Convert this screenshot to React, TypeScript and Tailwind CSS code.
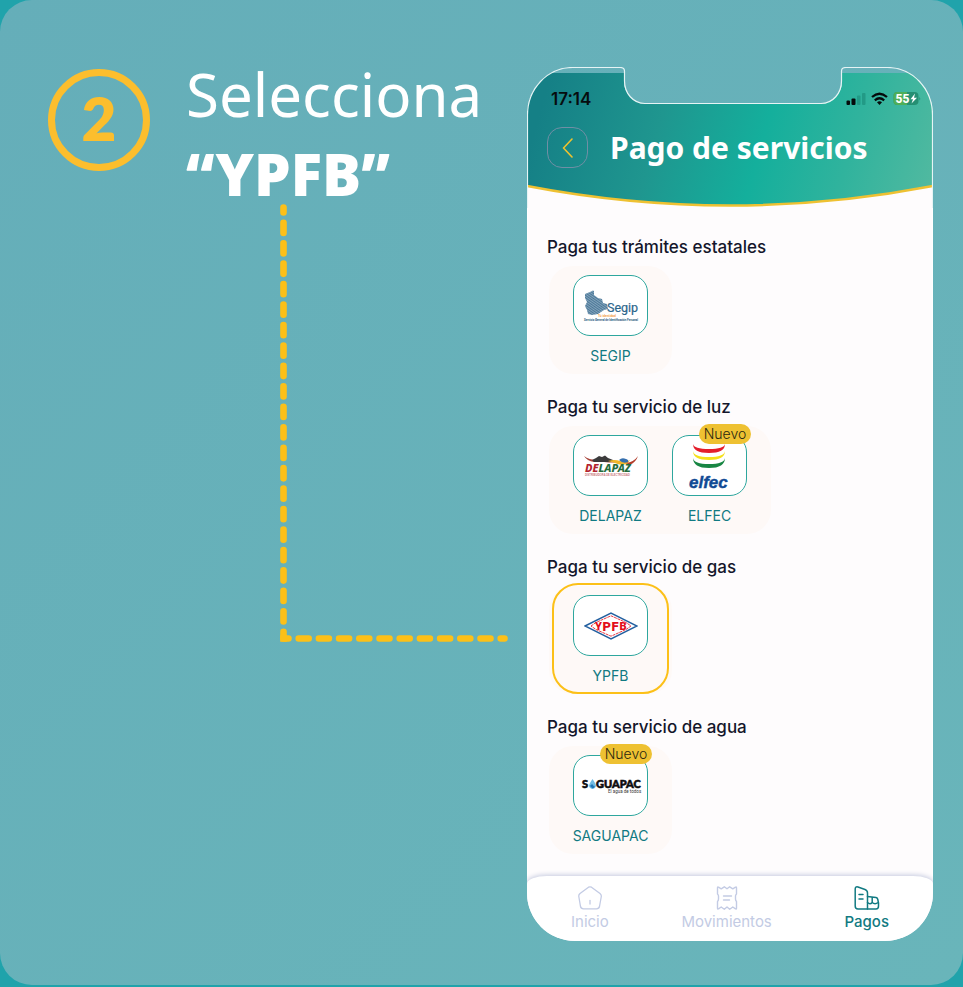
import type { ReactNode } from "react";

function SegipLogo() {
  return (
    <svg viewBox="0 0 54 32" className="h-8 w-[54px] overflow-visible" aria-hidden="true">
      <defs>
        <pattern id="finger" width="2" height="2" patternUnits="userSpaceOnUse" patternTransform="rotate(35)">
          <rect width="2" height="2" fill="#4b7899" />
          <rect width="2" height="0.6" fill="#a9c0d0" />
        </pattern>
      </defs>
      <path
        d="M1 4 L6 2 L9 0.5 L10 1 L10 5 L14 8 L18 9 L19 13 L23 14 L24 19 L20 20 L17 22 L14 24 L8 25 L4 24 L3 20 L1 16 L3 12 L1 8 Z"
        fill="url(#finger)"
      />
      <text x="23" y="22" fontFamily="Roboto, sans-serif" fontSize="12.500" fill="#2c668c" stroke="#2c668c" strokeWidth="0.200">Segip</text>
      <text x="14" y="27" fontFamily="Roboto, sans-serif" fontSize="3.200" fontWeight="700" fill="#f2a04c">Tú identidad</text>
      <text x="0" y="31" fontFamily="Roboto, sans-serif" fontSize="2.800" fontWeight="700" fill="#27597c">
        Servicio General de Identificación Personal
      </text>
    </svg>
  );
}

function DelapazLogo() {
  return (
    <svg viewBox="0 0 54 22" className="h-[22px] w-[54px] overflow-visible" aria-hidden="true">
      <path d="M0 1 Q5 5 13 5 L38 7 Q30 8 20 7 L10 7 Q3 6 0 1Z" fill="#a8433a" />
      <path d="M8 5 L12 3 L15 1 L18 2 L21 .5 L24 3 L29 5 L31 7 L10 7Z" fill="#3c3b3c" />
      <path d="M24 6 Q31 4 36 6 Q42 8 46 5 L43 9 Q36 11 31 8Z" fill="#efb52b" />
      <path d="M35 5 Q38 2 42 4 Q45 5 44 7 Q39 9 35 5Z" fill="#356fae" />
      <path d="M42 8 Q50 7 54 1 Q52 7 46 10Z" fill="#b23d2b" />
      <text x="1" y="17" fontFamily="Noto Sans, sans-serif" fontSize="11" fontWeight="800" fontStyle="italic">
        <tspan fill="#b3232e">DE</tspan>
        <tspan fill="#256c3c">LAPAZ</tspan>
      </text>
      <text x="1" y="20.500" fontFamily="Liberation Sans, Arial, sans-serif" fontSize="2.600" fontWeight="700" fill="#c9767a">
        DISTRIBUIDORA DE ELECTRICIDAD
      </text>
    </svg>
  );
}

function ElfecLogo() {
  return (
    <svg viewBox="0 0 48 52" className="h-[52px] w-12" aria-hidden="true">
      <path d="M7 4 Q8 9 23 9 Q38 9 39 4 Q39 13 23 13 Q7 13 7 4Z" fill="#e41e2b" />
      <path d="M7 11 Q8 17 23 17 Q38 17 39 11 Q39 20 23 20 Q7 20 7 11Z" fill="#f5e019" />
      <path d="M7 18 Q8 24 23 24 Q38 24 39 18 Q39 28 23 28 Q7 28 7 18Z" fill="#188643" />
      <text x="3" y="48" fontFamily="Liberation Sans, Arial, sans-serif" fontSize="17" fontWeight="700" fontStyle="italic" fill="#114a94" stroke="#114a94" strokeWidth="0.400">
        elfec
      </text>
    </svg>
  );
}

function YpfbLogo() {
  return (
    <svg viewBox="0 0 54 28" className="h-7 w-[54px]" aria-hidden="true">
      <path d="M1 14 L27 1 L53 14 L27 27Z" fill="#fff" stroke="#2460a0" strokeWidth="1.400" />
      <path d="M7 14 L12 10.500 L27 3.800 L42 10.500 L47 14 L42 17.500 L27 24.200 L12 17.500Z" fill="none" stroke="#e52431" strokeWidth="0.9" strokeDasharray="3 0.7" />
      <g fontFamily="Roboto, sans-serif" fontWeight="900" fill="#e30d1b" textAnchor="middle">
        <text x="14.500" y="18" fontSize="11">Y</text>
        <text x="22.800" y="19" fontSize="13">P</text>
        <text x="31" y="19" fontSize="13">F</text>
        <text x="39" y="18" fontSize="11">B</text>
      </g>
    </svg>
  );
}

function SaguapacLogo() {
  return (
    <svg viewBox="0 0 60 16" className="h-4 w-[60px] overflow-visible" aria-hidden="true">
      <g fontFamily="Lato, sans-serif" fontWeight="900" fontSize="11" fill="#0c0c0e" stroke="#0c0c0e" strokeWidth="0.600">
        <text x="1" y="10">S</text>
        <text x="15" y="10">GUAPAC</text>
      </g>
      <path d="M11.500 1 Q15 6 15 8 Q14 11 11 11 Q8 10 8 8 Q8 6 11.500 1Z" fill="#70bce4" />
      <path d="M9 8 Q11 5 12 7 Q13 9 14 8 Q13 11 11 10Z" fill="#2277b8" />
      <text x="27" y="15" fontFamily="Roboto, sans-serif" fontSize="4.500" fill="#333">El agua de todos</text>
    </svg>
  );
}

type Service = { name: string; logo: ReactNode; isNew?: boolean };
type Section = { title: string; services: Service[]; highlighted?: boolean };

const sections: Section[] = [
  { title: "Paga tus trámites estatales", services: [{ name: "SEGIP", logo: <SegipLogo /> }] },
  {
    title: "Paga tu servicio de luz",
    services: [
      { name: "DELAPAZ", logo: <DelapazLogo /> },
      { name: "ELFEC", logo: <ElfecLogo />, isNew: true },
    ],
  },
  { title: "Paga tu servicio de gas", services: [{ name: "YPFB", logo: <YpfbLogo /> }], highlighted: true },
  { title: "Paga tu servicio de agua", services: [{ name: "SAGUAPAC", logo: <SaguapacLogo />, isNew: true }] },
];

function ServiceButton({ service }: { service: Service }) {
  return (
    <button type="button" className="flex w-[75px] flex-col items-center gap-[10px]">
      <span className="relative flex h-[61px] w-[75px] items-center justify-center rounded-[17px] border border-[#2ea79e] bg-white">
        {service.logo}
        {service.isNew && (
          <span className="absolute -top-3 -right-[5px] flex h-5 w-[52px] items-center justify-center rounded-full bg-[#eec132] text-sm font-light text-[#2b2810]">
            Nuevo
          </span>
        )}
      </span>
      <span className="text-sm leading-5 whitespace-nowrap text-[#117a82]">{service.name}</span>
    </button>
  );
}

function ServiceSection({ section }: { section: Section }) {
  return (
    <section className="flex flex-col items-start gap-[7px]">
      <h2 className="text-[17px] leading-6 font-medium text-[#14162b]">{section.title}</h2>
      <div className="relative ml-[2px] flex h-[108px] gap-6 rounded-3xl bg-[#fef9f7] px-6 pt-[9px]">
        {section.services.map((s) => (
          <ServiceButton key={s.name} service={s} />
        ))}
        {section.highlighted && (
          <span className="pointer-events-none absolute inset-x-[3px] -top-[3px] bottom-0 rounded-[26px] border-2 border-[#fcc018]" />
        )}
      </div>
    </section>
  );
}

function HeaderBackdrop() {
  return (
    <svg viewBox="0 0 406 141" preserveAspectRatio="none" className="absolute inset-0 h-full w-full" aria-hidden="true">
      <defs>
        <linearGradient id="header" gradientUnits="userSpaceOnUse" x1="20" y1="20" x2="400" y2="130">
          <stop offset="0" stopColor="#158086" />
          <stop offset="0.3" stopColor="#1f968f" />
          <stop offset="0.56" stopColor="#14af9c" />
          <stop offset="0.78" stopColor="#30b39d" />
          <stop offset="1" stopColor="#50b9a0" />
        </linearGradient>
        <clipPath id="screen">
          <path d="M0 141 V48 C0 22 20 0 46 0 H93 Q97 0 97 4 V14 C97 26 106 36 118 36 H294 C306 36 315 26 315 14 V4 Q315 0 319 0 H360 C386 0 406 22 406 48 V141Z" />
        </clipPath>
      </defs>
      <g clipPath="url(#screen)">
        <rect y="6" width="406" height="135" fill="#fefcfd" />
        <path d="M0 6 H406 V119 Q203 158 0 119Z" fill="url(#header)" />
        <path d="M0 119 Q203 158 406 119" fill="none" stroke="#eec132" strokeWidth="2.400" />
      </g>
      <path
        d="M0.500 141 V48 C0.500 22 20 0.500 46 0.500 H93 Q97.500 0.500 97.500 4 V14 C97.500 26 106 36.500 118 36.500 H294 C306 36.500 314.500 26 314.500 14 V4 Q314.500 0.500 319 0.500 H360 C386 0.500 405.500 22 405.500 48 V141"
        fill="none"
        stroke="#e6f4f5"
        strokeWidth="1.200"
      />
    </svg>
  );
}

function StatusIcons() {
  return (
    <svg viewBox="0 0 76 16" className="h-4 w-[76px]" role="img" aria-label="Señal, wifi y batería">
      <rect x="1.500" y="9.500" width="3.500" height="4.500" rx="1" fill="#050b0b" />
      <rect x="6.500" y="7.500" width="4" height="6.500" rx="1" fill="#050b0b" />
      <rect x="12" y="4.500" width="3.500" height="9.500" rx="1" fill="#229a86" />
      <rect x="17" y="2" width="3.500" height="12" rx="1" fill="#229a86" />
      <g fill="none" stroke="#050b0b" strokeWidth="2.300">
        <path d="M27 6 Q34.500 -0.500 42 6" />
        <path d="M29.800 9.300 Q34.500 5.300 39.200 9.300" />
      </g>
      <path d="M32 11.300 Q34.500 9.300 37 11.300 L34.500 14Z" fill="#050b0b" />
      <rect x="48.500" y="1" width="25" height="13" rx="4" fill="#258f73" />
      <path d="M52.500 1 H62 V14 H52.500 Q48.500 14 48.500 10 V5 Q48.500 1 52.500 1Z" fill="#4fae58" />
      <path d="M74.300 5.500 Q76 7.500 74.300 9.500Z" fill="#258f73" />
      <text x="50.500" y="12" fontFamily="Roboto, sans-serif" fontSize="12" fontWeight="800" fill="#fff">55</text>
      <path d="M70 2.500 L65.500 8.300 H68 L66.500 12.500 L72 6.800 H69Z" fill="#fff" />
    </svg>
  );
}

function HomeIcon() {
  return (
    <svg viewBox="0 0 24 24" className="size-6" fill="none" stroke="currentColor" strokeWidth="1.300" strokeLinecap="round" strokeLinejoin="round" aria-hidden="true">
      <path d="M10.500 1.200 Q12 .5 13.500 1.200 L22 7.500 Q23.500 8.800 23.300 10.500 L21.500 20.500 Q21 22.700 18.500 22.800 H5.500 Q3 22.700 2.500 20.500 L.8 10.500 Q.5 8.800 2 7.500Z" />
      <path d="M12 14.500 V18" />
    </svg>
  );
}

function ReceiptIcon() {
  return (
    <svg viewBox="0 0 24 24" className="size-6" fill="none" stroke="currentColor" strokeWidth="1.400" strokeLinecap="round" strokeLinejoin="round" aria-hidden="true">
      <path d="M2.500 2 Q2.500 .5 3.500 1.200 L6.200 2.800 L9.300 .8 L12 2.800 L14.700 .8 L17.800 2.800 L20.500 1.200 Q21.500 .5 21.500 2 V8 Q20.500 9 20.500 10 V13 Q20.500 14.500 21.500 15.500 V22 Q21.500 23.500 20.500 22.800 L17.800 21 L14.700 23.200 L12 21 L9.300 23.200 L6.200 21 L3.500 22.800 Q2.500 23.500 2.500 22 V15.500 Q3.500 14.500 3.500 13 V10 Q3.500 9 2.500 8Z" />
      <path d="M8.500 10 H16.500 M8.500 14 H14.500" />
    </svg>
  );
}

function BuildingIcon() {
  return (
    <svg viewBox="0 0 26 24" className="h-6 w-[26px]" fill="none" stroke="currentColor" strokeWidth="1.500" strokeLinecap="round" strokeLinejoin="round" aria-hidden="true">
      <path d="M13.500 23 H4 Q1.200 23 1.200 20 V3 Q1.200 .3 4 1 L11 3.500 Q13.500 4.500 13.500 7Z" />
      <path d="M5 8.500 H9 M5 13 H9" />
      <path d="M13.500 10.500 L22 11.500 Q23.500 11.800 23.800 13.500 L24.500 17 V20 Q24.500 23 22 23 H13.500 M13.500 16.500 Q16 19 18.200 16.500 V11.500 M18.200 16.500 Q21 19 24 16.500" />
    </svg>
  );
}

const tabs = [
  { label: "Inicio", icon: <HomeIcon />, active: false },
  { label: "Movimientos", icon: <ReceiptIcon />, active: false },
  { label: "Pagos", icon: <BuildingIcon />, active: true },
];

function Phone() {
  return (
    <div className="flex flex-col overflow-hidden rounded-b-[48px] font-['Inter','Noto_Sans',sans-serif]">
      <header className="relative h-[141px]">
        <HeaderBackdrop />
        <div className="relative flex items-center justify-between pt-5 pr-3 pl-6">
          <span className="text-[17px] leading-6 font-semibold text-[#060c0e]">17:14</span>
          <StatusIcons />
        </div>
        <div className="relative mt-4 flex items-center gap-[22px] pl-5">
          <button type="button" aria-label="Volver" className="flex size-[41px] items-center justify-center rounded-[15px] border border-[#6f8fa5]">
            <svg viewBox="0 0 12 20" className="h-5 w-3" fill="none" stroke="#efc22e" strokeWidth="1.600" strokeLinecap="round" strokeLinejoin="round" aria-hidden="true">
              <path d="M10 1 L1.500 10 L10 19" />
            </svg>
          </button>
          <h1 className="font-['Noto_Sans',sans-serif] text-3xl leading-10 font-bold whitespace-nowrap text-white">Pago de servicios</h1>
        </div>
      </header>
      <main className="flex flex-col gap-[21px] border-x border-white bg-[#fefcfd] px-[19px] pt-[27px] pb-[22px]">
        {sections.map((s) => (
          <ServiceSection key={s.title} section={s} />
        ))}
      </main>
      <div className="bg-[#fefcfd]">
        <nav className="flex h-[65px] items-start justify-between bg-white px-11 pt-[10px] shadow-[0_-1px_5px_#c3c8de] [border-radius:20px_20px_0_0/8px_8px_0_0]">
          {tabs.map((t) => (
            <button
              key={t.label}
              type="button"
              className={`flex flex-col items-center gap-[2px] text-[15px] leading-5 ${t.active ? "font-medium text-[#117a82]" : "text-[#c3cbe4]"}`}
            >
              {t.icon}
              {t.label}
            </button>
          ))}
        </nav>
      </div>
    </div>
  );
}

function Connector() {
  return (
    <svg viewBox="0 0 229 438" className="-mt-[9px] ml-[232px] h-[438px] w-[229px]" fill="none" stroke="#fcc018" strokeWidth="6.600" strokeLinecap="round" aria-hidden="true">
      <path d="M3.500 3.500 V434" strokeDasharray="10.200 10.250" strokeDashoffset="5.200" />
      <path d="M3.500 434.500 H224.500" strokeDasharray="10 10.200" strokeDashoffset="5" />
      <path d="M0.200 431.200 h6.600 v6.600 h-6.600Z" fill="#fcc018" stroke="none" />
    </svg>
  );
}

export default function App() {
  return (
    <div className="bg-[#20a3ab] pb-[2px]">
      <div className="grid grid-cols-[1fr_406px] rounded-[32px] bg-linear-to-br from-[#65aeb9] to-[#69b5ba] pt-[67px] pr-[30px] pb-11 pl-12">
        <div>
          <div className="flex gap-9">
            <div className="mt-[2px] flex size-[102px] shrink-0 items-center justify-center rounded-full border-[7px] border-[#fcbe2d] pb-1 font-['Lato',sans-serif] text-[60px] leading-none font-extrabold text-[#fcbe2d]">
              2
            </div>
            <p className="-mt-3 font-['Noto_Sans',sans-serif] text-[60px] leading-[79px] font-normal text-white">
              Selecciona
              <br />
              <strong className="text-[58px] font-black">“YPFB”</strong>
            </p>
          </div>
          <Connector />
        </div>
        <Phone />
      </div>
    </div>
  );
}
